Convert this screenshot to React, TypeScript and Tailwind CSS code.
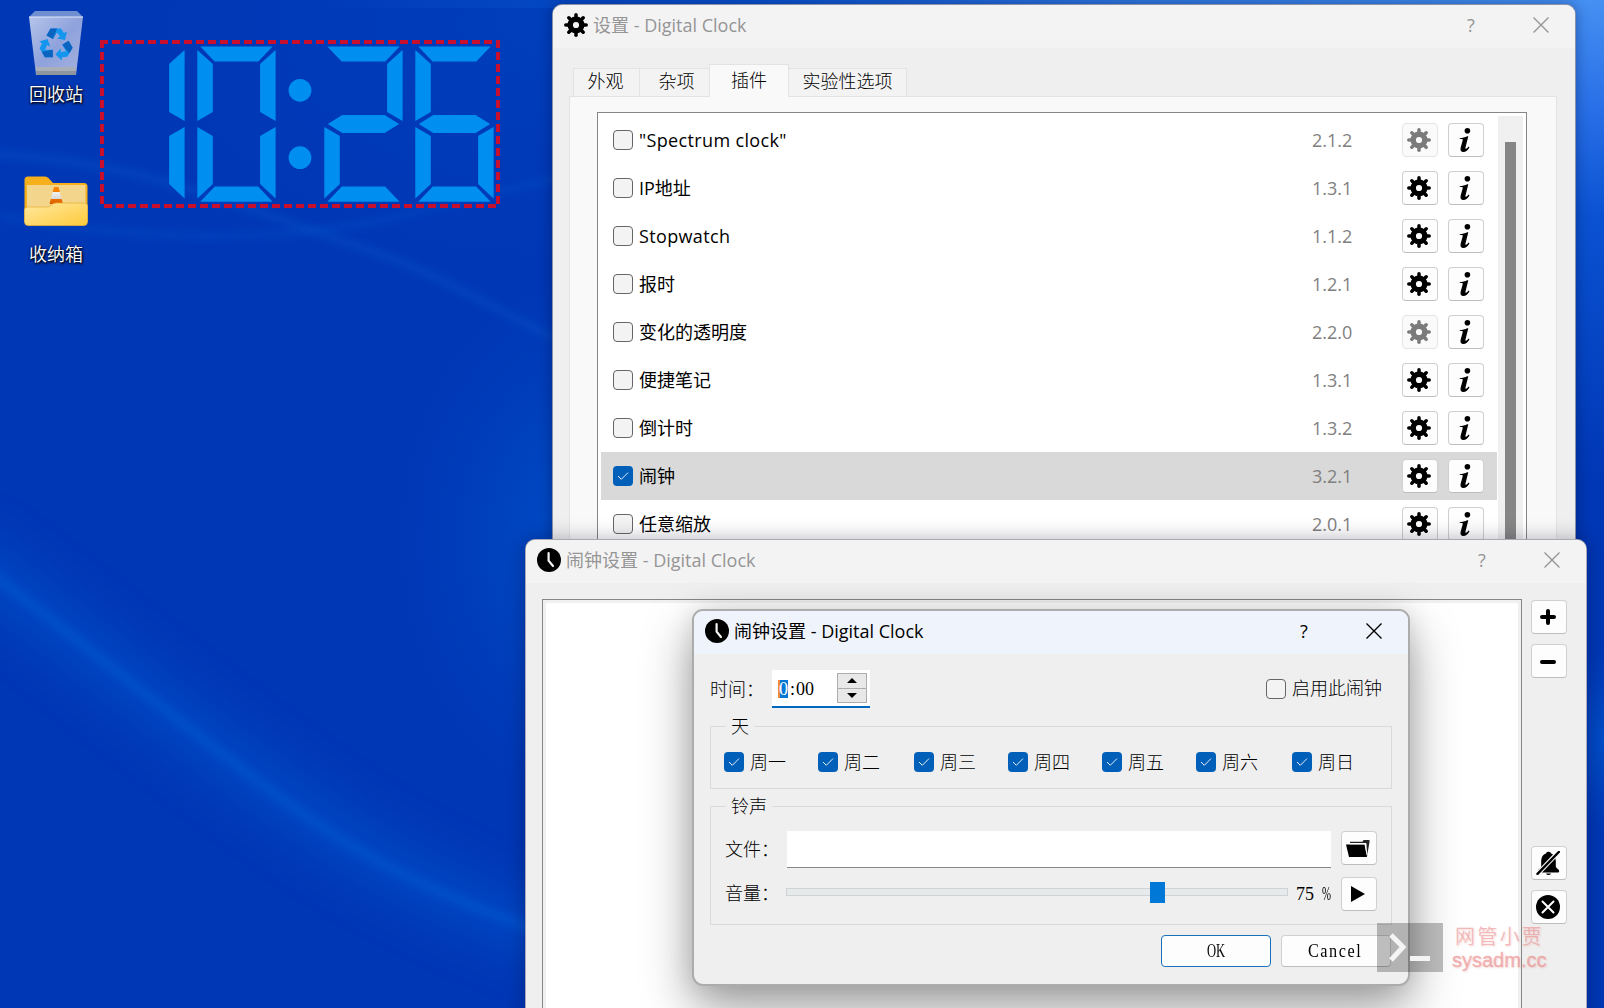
import type { ReactNode } from 'react';

const UI = "font-['Open_Sans','Noto_Sans_CJK_SC',sans-serif]";
const SONG = "font-['Liberation_Serif','Noto_Sans_CJK_SC',serif]";

function GearIcon() {
  return (
    <svg viewBox="0 0 24 24" className="size-6" fill="none" stroke="currentColor">
      <circle cx="12" cy="12" r="5.8" strokeWidth="5.4" />
      {[0, 45, 90, 135, 180, 225, 270, 315].map((a) => (
        <path key={a} d="M12 1.8V5" strokeWidth="3.5" strokeLinecap="round" transform={`rotate(${a} 12 12)`} />
      ))}
    </svg>
  );
}

function InfoIcon() {
  return (
    <svg viewBox="0 0 12 24" className="h-6 w-3" fill="currentColor">
      <circle cx="8.4" cy="2.8" r="2.8" />
      <path d="M.8 10.2C3.4 9.9 6 9.1 8.3 8.2H9.3L6.6 18.9C6.3 20.2 6.500 20.8 7 20.8C7.800 20.8 8.800 19.8 9.600 18.6L10.500 19.2C9 22 6.800 24 4.400 24C2 24 1 22.5 1.600 20.1L3.700 12.3C3.900 11.4 3.600 11 2.700 11H.7Z" />
    </svg>
  );
}

function ClockIcon() {
  return (
    <svg viewBox="0 0 24 24" className="size-6">
      <circle cx="12" cy="12" r="12" />
      <path d="M11.6 5V12.6L16 18" fill="none" stroke="#f4f4f4" strokeWidth="2.2" strokeLinecap="round" />
    </svg>
  );
}

function CloseIcon() {
  return (
    <svg viewBox="0 0 16 16" className="size-4" fill="none" stroke="currentColor" strokeWidth="1.4">
      <path d="M.5 .5L15.5 15.5M15.5 .5L.5 15.5" />
    </svg>
  );
}

function CheckBox({ checked = false }: { checked?: boolean }) {
  return checked ? (
    <span className="flex size-5 shrink-0 items-center justify-center rounded-[4px] bg-[#005fb8]">
      <svg viewBox="0 0 12 10" className="h-2.5 w-3" fill="none" stroke="#e8f2fb" strokeWidth="1">
        <path d="M1 5L4.3 8.3L11 1.6" />
      </svg>
    </span>
  ) : (
    <span className="size-5 shrink-0 rounded-[4px] border border-[#666] bg-[#f3f3f3]" />
  );
}

function ToolButton({ children, disabled = false }: { children: ReactNode; disabled?: boolean }) {
  return disabled ? (
    <button className="flex h-[34px] w-9 shrink-0 items-center justify-center rounded-[4px] border border-[#e5e5e5] bg-[#fafafa] pr-0.5 text-[#7b7b7b]">{children}</button>
  ) : (
    <button className="flex h-[34px] w-9 shrink-0 items-center justify-center rounded-[4px] border border-[#d0d0d0] border-b-[#bdbdbd] bg-[#fdfdfd] pr-0.5 text-black">{children}</button>
  );
}

function TitleBar({ icon, title, className }: { icon: ReactNode; title: string; className: string }) {
  return (
    <header className={`flex shrink-0 items-center ${className}`}>
      {icon}
      <span className="ml-[5px] flex-1 whitespace-pre text-[18px] leading-6">{title}</span>
      <span className="mr-[54px] w-4 text-center text-[18px] leading-6">?</span>
      <CloseIcon />
    </header>
  );
}

const SEGMENTS = {
  a: '3,46.5 75.3,46.5 61,61.5 17.3,61.5',
  b: '78.3,50 62.8,64 62.8,112 78.3,121',
  c: '78.3,127 62.8,136 62.8,184 78.3,198.5',
  d: '3,201.7 17.5,186.5 60.8,186.5 75.3,201.7',
  e: '0,127 15.5,136 15.5,184 0,198.5',
  f: '0,50 15.5,64 15.5,112 0,121',
  g: '3.5,124 18,115 60.3,115 74.8,124 60.3,133 18,133',
};
const DIGITS: { x: number; on: (keyof typeof SEGMENTS)[] }[] = [
  { x: 106.3, on: ['b', 'c'] },
  { x: 197.3, on: ['a', 'b', 'c', 'd', 'e', 'f'] },
  { x: 324.3, on: ['a', 'b', 'g', 'e', 'd'] },
  { x: 415.3, on: ['a', 'f', 'g', 'e', 'c', 'd'] },
];

function SegmentClock() {
  return (
    <svg viewBox="100 40 400 168" className="absolute left-[100px] top-10 h-[168px] w-[400px]">
      <g fill="#008ff0">
        {DIGITS.map((d) => (
          <g key={d.x} transform={`translate(${d.x} 0)`}>
            {d.on.map((s) => (
              <polygon key={s} points={SEGMENTS[s]} />
            ))}
          </g>
        ))}
        <circle cx="300" cy="90.3" r="11.4" />
        <circle cx="300" cy="157.7" r="11.4" />
      </g>
      <g stroke="#c8102e" strokeWidth="4" strokeDasharray="8 4">
        <path d="M100 42H500" />
        <path d="M102 40V208" />
        <path d="M498 40V208" />
        <path d="M104 206H500" />
      </g>
    </svg>
  );
}

function Wallpaper() {
  return (
    <svg viewBox="0 0 1604 1008" className="absolute inset-0 size-full">
      <defs>
        <filter id="soft" x="-20%" y="-20%" width="140%" height="140%"><feGaussianBlur stdDeviation="22" /></filter>
        <filter id="fine" x="-20%" y="-20%" width="140%" height="140%"><feGaussianBlur stdDeviation="4" /></filter>
        <linearGradient id="top" x1="0" x2="1">
          <stop offset="0" stopColor="#0a48c4" stopOpacity="0" />
          <stop offset=".35" stopColor="#0a50cc" />
          <stop offset=".65" stopColor="#2f78e0" />
          <stop offset="1" stopColor="#4592f2" />
        </linearGradient>
        <linearGradient id="right" x1="0" x2="0" y1="0" y2="1">
          <stop offset="0" stopColor="#4590f2" />
          <stop offset=".22" stopColor="#2a70e8" />
          <stop offset=".45" stopColor="#0a52d2" />
          <stop offset="1" stopColor="#0037b5" />
        </linearGradient>
        <radialGradient id="glow">
          <stop offset="0" stopColor="#0058d0" stopOpacity=".7" />
          <stop offset="1" stopColor="#0050c8" stopOpacity="0" />
        </radialGradient>
      </defs>
      <rect width="1604" height="1008" fill="#0037b5" />
      <rect x="300" width="1304" height="8" fill="url(#top)" />
      <rect x="1560" width="44" height="480" fill="url(#right)" />
      <ellipse cx="590" cy="540" rx="190" ry="260" fill="url(#glow)" />
      <ellipse cx="560" cy="20" rx="400" ry="240" fill="url(#glow)" opacity=".35" />
      <g fill="none">
        <path d="M-40 552C60 624 140 694 260 780S440 900 620 960" stroke="#0052cc" strokeWidth="60" opacity=".5" filter="url(#soft)" />
        <path d="M-40 550C60 624 140 692 260 783S440 895 620 962" stroke="#0060d8" strokeWidth="11" opacity=".4" filter="url(#fine)" />
        <path d="M-20 154C120 156 220 200 340 240S480 305 580 350" stroke="#0860d0" strokeWidth="8" opacity=".3" filter="url(#fine)" />
        <path d="M0 216C160 245 300 240 400 216S500 190 570 176" stroke="#0860d0" strokeWidth="6" opacity=".3" filter="url(#fine)" />
      </g>
      <ellipse cx="1604" cy="740" rx="50" ry="90" fill="url(#glow)" />
    </svg>
  );
}

function RecycleBin() {
  return (
    <svg viewBox="0 0 56 66" className="h-[66px] w-14">
      <defs>
        <linearGradient id="bin" x1="0" x2="1" y2="1">
          <stop offset="0" stopColor="#b4c4ea" />
          <stop offset=".5" stopColor="#8fa2dc" />
          <stop offset="1" stopColor="#a5b2de" />
        </linearGradient>
      </defs>
      <path d="M7 1H49L55 7H1Z" fill="#6f8fd0" />
      <path d="M1 7H55L48 65H8Z" fill="url(#bin)" />
      <path d="M1 7H55" stroke="#dfe8fa" />
      <path d="M8 57H48V65H8Z" fill="#a9afb9" />
      <path d="M8 61H48V65H8Z" fill="#8e959f" />
      <g transform="translate(28 34.5)">
        {[0, 120, 240].map((a) => (
          <g key={a} transform={`rotate(${a})`}>
            <path d="M-9.5 -9L-5.5 -16H5L8 -11.5L11 -13L9 -4.5L1 -6L4 -8L1 -12L-3 -5.5Z" fill="#1496ee" />
            <path d="M-9.5 -9L-5.5 -16H1L-3 -5.5Z" fill="#0a64c0" />
          </g>
        ))}
      </g>
    </svg>
  );
}

function FolderShortcut() {
  return (
    <svg viewBox="0 0 64 50" className="h-[50px] w-16">
      <defs>
        <linearGradient id="front" x1="0" x2="1" y2="1">
          <stop offset="0" stopColor="#ffe9a0" />
          <stop offset="1" stopColor="#ffca3c" />
        </linearGradient>
        <linearGradient id="cone" x1="0" x2="0" y1="0" y2="1">
          <stop offset="0" stopColor="#ff8800" />
          <stop offset=".3" stopColor="#f07c00" />
          <stop offset=".31" stopColor="#f0f0f0" />
          <stop offset=".68" stopColor="#d8d8d8" />
          <stop offset=".7" stopColor="#ee6f00" />
          <stop offset="1" stopColor="#d85c00" />
        </linearGradient>
      </defs>
      <path d="M.5 4Q.5 .5 4 .5H21Q23 .5 24.500 2L29 7H60Q63.500 7 63.500 10.500V46H.5Z" fill="#f5b01c" />
      <path d="M3 9H61.500V32H3Z" fill="#f3d68c" />
      <path d="M30 11H34.500L39 28H25.500Z" fill="url(#cone)" />
      <path d="M.5 34Q.5 31 4 31H22Q25 31 27 29.500Q29 27 32 27H60Q63.500 27 63.500 30V45.500Q63.500 49.500 60 49.500H4Q.5 49.500 .5 45.500Z" fill="url(#front)" stroke="#e6b23c" strokeWidth=".8" />
    </svg>
  );
}

function DesktopIcon({ label, children, className }: { label: string; children: ReactNode; className: string }) {
  return (
    <div className={`absolute left-0 flex w-28 flex-col items-center ${className}`}>
      {children}
      <span className="text-[18px] font-[350] leading-6 text-white [text-shadow:1px_1px_2px_#000,0_1px_3px_#000]">{label}</span>
    </div>
  );
}

const PLUGINS = [
  { name: '"Spectrum clock"', version: '2.1.2', configurable: false, latin: true },
  { name: 'IP地址', version: '1.3.1', configurable: true },
  { name: 'Stopwatch', version: '1.1.2', configurable: true, latin: true },
  { name: '报时', version: '1.2.1', configurable: true },
  { name: '变化的透明度', version: '2.2.0', configurable: false },
  { name: '便捷笔记', version: '1.3.1', configurable: true },
  { name: '倒计时', version: '1.3.2', configurable: true },
  { name: '闹钟', version: '3.2.1', configurable: true, enabled: true },
  { name: '任意缩放', version: '2.0.1', configurable: true },
];

function SettingsWindow() {
  return (
    <section className="absolute left-[552px] top-1 flex h-[560px] w-[1024px] flex-col overflow-hidden rounded-t-[10px] border border-[#5f6b8c]/70 bg-[#efefef] shadow-[0_0_14px_rgba(0,0,40,0.35)]">
      <TitleBar className="h-[43px] bg-[#f3f3f3] pb-[3px] pl-[11px] pr-[26px] text-[#959595]" icon={<span className="text-black"><GearIcon /></span>} title="设置 - Digital Clock" />
      <div className={`ml-5 mt-4 flex h-8 items-end text-[18px] font-light leading-6 ${SONG}`}>
        <div className="flex h-7 w-[67px] items-center justify-center border border-b-0 border-[#e3e3e3] bg-[#f3f3f3] pb-0.5 pr-0.5">外观</div>
        <div className="flex h-7 w-[69px] items-center justify-center border-t border-[#e3e3e3] bg-[#f3f3f3] pb-0.5 pl-1">杂项</div>
        <div className="z-10 -mb-px flex h-[33px] w-[80px] items-center justify-center border border-b-0 border-[#e3e3e3] bg-[#f9f9f9]">插件</div>
        <div className="flex h-7 w-[118px] items-center justify-center border border-b-0 border-l-0 border-[#e3e3e3] bg-[#f3f3f3] pb-0.5">实验性选项</div>
      </div>
      <div className="ml-4 mr-[18px] flex-1 border border-[#e3e3e3] bg-[#f9f9f9] pl-[27px] pr-[29px] pt-[15px]">
        <div className="flex h-[480px] border border-[#868686] bg-white pl-[3px] pr-[3px] pt-[3px]">
          <ul className="flex-1">
            {PLUGINS.map((p) => (
              <li key={p.name} className={p.enabled ? 'mr-px flex h-12 items-center bg-[#d9d9d9] pl-3 pr-[13px]' : 'mr-px flex h-12 items-center pl-3 pr-[13px]'}>
                <CheckBox checked={p.enabled} />
                <span className={p.latin ? 'ml-1.5 flex-1 text-[18px] leading-6 tracking-[0.35px] text-black' : 'ml-1.5 flex-1 text-[18px] leading-6 text-black'}>{p.name}</span>
                <span className="w-[90px] text-[18px] leading-6 text-[#7f7f7f]">{p.version}</span>
                <div className="flex gap-[10px]">
                  <ToolButton disabled={!p.configurable}><GearIcon /></ToolButton>
                  <ToolButton><InfoIcon /></ToolButton>
                </div>
              </li>
            ))}
          </ul>
          <div className="w-[25px] bg-[#f0f0f0] pl-[7px] pt-[26px]">
            <div className="h-full w-[11px] bg-[#868686]" />
          </div>
        </div>
      </div>
    </section>
  );
}

function AlarmListWindow() {
  return (
    <section className="absolute left-[525px] top-[539px] flex h-[480px] w-[1062px] flex-col overflow-hidden rounded-t-[10px] border border-[#8a8f9c]/70 bg-[#efefef] shadow-[0_0_20px_rgba(0,0,40,0.3)]">
      <TitleBar className="h-[43px] bg-[#f3f3f3] pb-[3px] pl-[11px] pr-[26px] text-[#959595]" icon={<ClockIcon />} title="闹钟设置 - Digital Clock" />
      <div className="flex flex-1 pl-4 pr-[19px] pt-4">
        <div className="flex-1 border border-[#868686] bg-[#f0f0f0] p-[3px]"><div className="h-full bg-white" /></div>
        <div className="ml-[9px] mt-px flex flex-col">
          <ToolButton><svg viewBox="0 0 16 16" className="size-4"><path d="M8 2V14M2 8H14" stroke="#000" strokeWidth="4" strokeLinecap="round" /></svg></ToolButton>
          <div className="mt-[10px]"><ToolButton><svg viewBox="0 0 16 16" className="size-4"><path d="M2 9H14" stroke="#000" strokeWidth="4" strokeLinecap="round" /></svg></ToolButton></div>
          <div className="mt-[168px]">
            <ToolButton>
              <svg viewBox="0 0 24 24" className="size-6">
                <path d="M12.500 .7A2.200 2.200 0 0 1 15 2.500C18.500 3.500 19.700 7 19.800 10.500V15.500Q20 17 22.500 18.500Q24 20.500 22.500 21.500H3Q1.500 20.500 2.500 18.500Q5.200 17 5.200 15.500V10.500C5.300 7 6.500 3.500 10 2.500A2.200 2.200 0 0 1 12.500 .7ZM10 22.500H15Q14.500 24 12.500 24T10 22.500Z" />
                <path d="M.5 24L23.500 0" stroke="#fdfdfd" strokeWidth="4.600" />
                <path d="M1.500 22.800L22.800 1" stroke="#000" strokeWidth="2.500" strokeLinecap="round" />
              </svg>
            </ToolButton>
          </div>
          <div className="mt-[10px]">
            <ToolButton>
              <svg viewBox="0 0 24 24" className="size-6"><circle cx="12" cy="12" r="12" /><path d="M6.500 6.500L17.500 17.500M17.500 6.500L6.500 17.500" stroke="#fff" strokeWidth="2" strokeLinecap="round" /></svg>
            </ToolButton>
          </div>
        </div>
      </div>
    </section>
  );
}

function Group({ title, className, children }: { title: string; className: string; children: ReactNode }) {
  return (
    <div className={`relative border border-[#dadada] ${className}`}>
      <span className="absolute -top-3 left-[15px] bg-[#efefef] pl-[5px] pr-[5px] leading-6">{title}</span>
      {children}
    </div>
  );
}

const DAYS = ['周一', '周二', '周三', '周四', '周五', '周六', '周日'];

function AlarmDialog() {
  return (
    <section className="absolute left-[692px] top-[609px] flex h-[377px] w-[718px] flex-col overflow-hidden rounded-[11px] border-2 border-[#acacac] bg-[#efefef] bg-clip-padding shadow-[0_0_24px_rgba(0,0,0,0.1),0_22px_50px_rgba(0,0,0,0.38)]">
      <TitleBar className="h-[43px] bg-[#eff3fb] pb-[3px] pl-[11px] pr-[26px] text-black" icon={<ClockIcon />} title="闹钟设置 - Digital Clock" />
      <div className={`flex-1 px-4 pt-4 text-[18px] font-light leading-6 text-black ${SONG}`}>
        <div className="flex h-[38px] items-center">
          <span className="w-[62px] whitespace-nowrap pt-0.5">时间：</span>
          <div className="flex h-[38px] w-[98px] items-center border-b-2 border-[#0067c0] bg-white pl-[6px] pr-[3px]">
            <span className="mt-0.5 h-[18px] border-l-2 border-[#f08838] bg-[#0078d7] leading-[18px] text-white"><span className="-ml-px">0</span></span>
            <span className="ml-[2px] mt-0.5 flex-1 whitespace-nowrap">:<span className="ml-px">00</span></span>
            <div className="flex h-[30px] w-[30px] flex-col border border-[#adadad] bg-[#e8e8e8]">
              <div className="flex flex-1 items-center justify-center border-b border-[#adadad]"><svg viewBox="0 0 10 5" className="h-[5px] w-2.5"><path d="M5 0L10 5H0Z" /></svg></div>
              <div className="flex flex-1 items-center justify-center"><svg viewBox="0 0 10 5" className="h-[5px] w-2.5"><path d="M5 5L10 0H0Z" /></svg></div>
            </div>
          </div>
          <label className="ml-auto flex items-center gap-1.5 pr-2.5"><CheckBox />启用此闹钟</label>
        </div>
        <Group title="天" className="mt-[18px] flex h-[63px] items-center pl-[13px] pt-[9px]">
          {DAYS.map((d, i) => (
            <label key={d} className={i === 1 || i === 5 ? 'flex w-24 items-center gap-1.5' : 'flex w-[94px] items-center gap-1.5'}><CheckBox checked /><span className="pt-0.5">{d}</span></label>
          ))}
        </Group>
        <Group title="铃声" className="mt-[17px] h-[119px] pl-[14px] pr-[14px] pt-6">
          <div className="flex h-[38px] items-start">
            <span className="w-[62px] whitespace-nowrap pt-[7px]">文件：</span>
            <div className="h-[37px] flex-1 border-b border-[#868686] bg-white" />
            <div className="ml-[10px]">
              <ToolButton>
                <svg viewBox="0 0 24 17" className="h-[17px] w-6">
                  <path d="M4 3.500V1.800H16.500L17.500 0H23.500V2L21 16.500H19.500L20.500 3.500Z" fill="#222" />
                  <path d="M0 4.500H18.500L21 17H3Z" />
                  <path d="M4 3.600H19.500L21 15" fill="none" stroke="#fdfdfd" strokeWidth="1.100" />
                </svg>
              </ToolButton>
            </div>
          </div>
          <div className="mt-2 flex h-[34px] items-center">
            <span className="w-[61px] whitespace-nowrap">音量：</span>
            <div className="relative -top-0.5 h-2 w-[503px] border border-[#d0d3d6] bg-[#e7eaea]"><div className="absolute -top-[7px] left-[363px] h-[21px] w-[15px] bg-[#0078d7]" /></div>
            <span className="ml-2 w-[45px] whitespace-nowrap">75<span className="ml-[8px] inline-block w-[9px] origin-left scale-x-60">%</span></span>
            <ToolButton><svg viewBox="0 0 14 16" className="h-4 w-3.5"><path d="M0 0L14 8L0 16Z" /></svg></ToolButton>
          </div>
        </Group>
        <div className="mr-px mt-[10px] flex justify-end gap-[10px]">
          <button className="flex h-8 w-[110px] items-center justify-center rounded-[4px] border border-[#1870b8] bg-[#fdfdfd]"><span className="scale-x-70">OK</span></button>
          <button className="flex h-8 w-[110px] items-center justify-center rounded-[4px] border border-[#d0d0d0] border-b-[#bdbdbd] bg-[#fdfdfd] pr-0.5"><span className="scale-x-90 tracking-[1.700px]">Cancel</span></button>
        </div>
      </div>
    </section>
  );
}

function Watermark() {
  return (
    <div className="absolute left-[1377px] top-[923px] flex items-start">
      <div className="h-[49px] w-[66px] bg-black/25">
        <svg viewBox="0 0 66 49" className="size-full" fill="none" stroke="#f4f4f4" strokeWidth="5"><path d="M14 12L26 24L14 37M33 35.500H53" /></svg>
      </div>
      <div className="ml-[9px] text-[#e88080]/50 [text-shadow:1px_1px_2px_rgba(230,120,120,0.3)]">
        <div className="ml-[3px] text-[20px] font-[350] leading-[27px] tracking-[2.200px]">网管小贾</div>
        <div className="text-[20px] leading-[21px] font-['Liberation_Sans',sans-serif] [-webkit-text-stroke:0.4px]">sysadm.cc</div>
      </div>
    </div>
  );
}

export default function App() {
  return (
    <main className={`relative h-[1008px] w-[1604px] overflow-hidden bg-[#0037b5] ${UI}`}>
      <Wallpaper />
      <DesktopIcon label="回收站" className="top-[10px] gap-1.5"><RecycleBin /></DesktopIcon>
      <DesktopIcon label="收纳箱" className="top-[176px] gap-4"><FolderShortcut /></DesktopIcon>
      <SegmentClock />
      <SettingsWindow />
      <AlarmListWindow />
      <AlarmDialog />
      <Watermark />
    </main>
  );
}
